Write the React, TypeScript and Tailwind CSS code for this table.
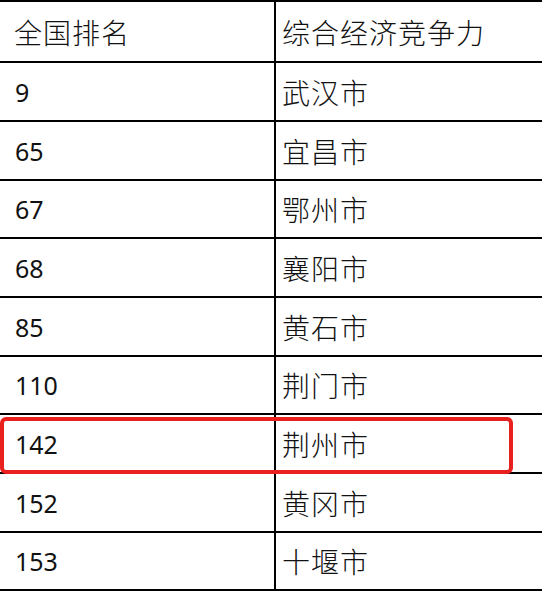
const rows = [
  { rank: "9", city: "武汉市", h: "h-[59px]" },
  { rank: "65", city: "宜昌市", h: "h-[59px]" },
  { rank: "67", city: "鄂州市", h: "h-[58px]" },
  { rank: "68", city: "襄阳市", h: "h-[59px]" },
  { rank: "85", city: "黄石市", h: "h-[59px]" },
  { rank: "110", city: "荆门市", h: "h-[58px]" },
  { rank: "142", city: "荆州市", h: "h-[59px]", mark: true },
  { rank: "152", city: "黄冈市", h: "h-[59px]" },
  { rank: "153", city: "十堰市", h: "h-[58px]" },
]

const cjk = "font-['Noto_Sans_CJK_SC',sans-serif] font-light text-[28px] tracking-[1px] leading-none"
const num = "font-['Noto_Sans',sans-serif] text-[25px] leading-none"

export default function App() {
  return (
    <div className="w-[542px] h-[592px] bg-white overflow-hidden text-[#111]">
      <div className="border-t-2 border-black">
        <div className="flex h-[61px] border-b-2 border-black">
          <div className={`w-[276px] shrink-0 flex items-center pl-[14px] border-r-2 border-black ${cjk}`}>
            全国排名
          </div>
          <div className={`flex-1 flex items-center pl-[6px] ${cjk}`}>综合经济竞争力</div>
        </div>
        {rows.map((r) => (
          <div key={r.rank} className={`relative flex border-b-2 border-black ${r.h}`}>
            <div className={`w-[276px] shrink-0 flex items-center pl-[15px] pt-[1px] border-r-2 border-black ${num}`}>
              {r.rank}
            </div>
            <div className={`flex-1 flex items-center pl-[6px] ${cjk}`}>{r.city}</div>
            {r.mark && (
              <div className="absolute left-0 top-[2px] w-[513px] h-[57px] border-[4px] border-[#e8201e] rounded-[6px]" />
            )}
          </div>
        ))}
      </div>
    </div>
  )
}
